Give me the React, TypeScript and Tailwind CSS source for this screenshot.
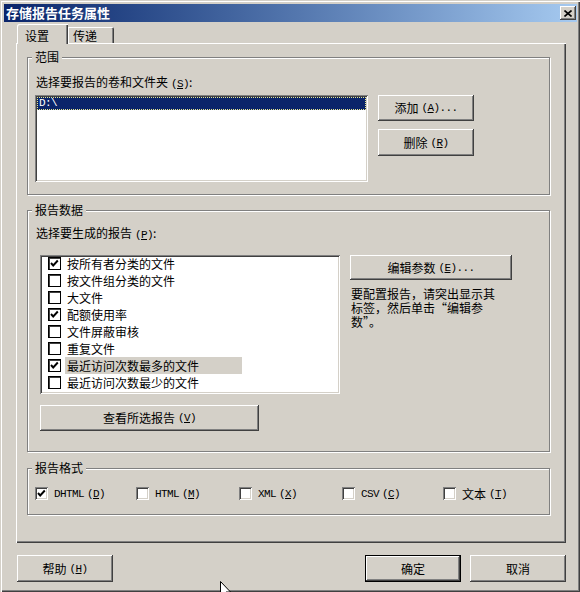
import React from "react";

const btn =
  "flex items-center justify-center bg-[#d4d0c8] shadow-[inset_-1px_-1px_#404040,inset_1px_1px_#ffffff,inset_-2px_-2px_#808080,inset_2px_2px_#d4d0c8]";
const sunken =
  "bg-white shadow-[inset_1px_1px_#808080,inset_-1px_-1px_#ffffff,inset_2px_2px_#404040,inset_-2px_-2px_#d4d0c8]";
const lat = "font-['Liberation_Mono',monospace] text-[11px] tracking-[-0.6px]";

function Mn({ k, dots }: { k: string; dots?: boolean }) {
  return (
    <span className={`${lat} ml-[3px]`}>
      (<span className="underline">{k}</span>){dots ? "..." : ""}
    </span>
  );
}

function Cb({ checked, flat }: { checked?: boolean; flat?: boolean }) {
  return (
    <div
      className={`relative w-[13px] h-[13px] shrink-0 bg-white ${
        flat
          ? "border border-black shadow-[inset_1px_1px_#404040]"
          : "shadow-[inset_1px_1px_#808080,inset_-1px_-1px_#ffffff,inset_2px_2px_#404040,inset_-2px_-2px_#d4d0c8]"
      }`}
    >
      {checked && (
        <svg
          className={`absolute ${flat ? "left-[-1px] top-[-1px]" : "left-0 top-0"}`}
          width="13"
          height="13"
          viewBox="0 0 13 13"
        >
          <polyline points="3,6 5.2,8.5 9.8,3.5" fill="none" stroke="#000" strokeWidth="1.9" />
        </svg>
      )}
    </div>
  );
}

function Group({
  label,
  className,
  children,
}: {
  label: string;
  className: string;
  children: React.ReactNode;
}) {
  return (
    <div
      className={`relative w-[523px] shrink-0 border border-[#808080] shadow-[inset_1px_1px_#ffffff,1px_1px_#ffffff] ${className}`}
    >
      <div className="absolute left-[4px] top-[-8px] bg-[#d4d0c8] px-[3px] text-[12px] leading-[14px]">
        {label}
      </div>
      {children}
    </div>
  );
}

const reports: [string, boolean, boolean?][] = [
  ["按所有者分类的文件", true],
  ["按文件组分类的文件", false],
  ["大文件", false],
  ["配额使用率", true],
  ["文件屏蔽审核", false],
  ["重复文件", false],
  ["最近访问次数最多的文件", true, true],
  ["最近访问次数最少的文件", false],
];

const formats: [string, string, string, boolean, string][] = [
  ["DHTML", "D", "w-[101px]", true, "latin"],
  ["HTML", "M", "w-[103px]", false, "latin"],
  ["XML", "X", "w-[103px]", false, "latin"],
  ["CSV", "C", "w-[101px]", false, "latin"],
  ["文本", "T", "w-[100px]", false, "cjk"],
];

export default function App() {
  return (
    <div className="relative w-[580px] h-[592px] overflow-hidden bg-[#d4d0c8] pt-[4px] pl-[4px] pr-[3px] text-black text-[12px] leading-[14px] font-['Noto_Sans_CJK_SC','Noto_Sans',sans-serif] shadow-[inset_1px_1px_#d4d0c8,inset_2px_2px_#ffffff,inset_-1px_-1px_#404040,inset_-2px_-2px_#808080]">
      {/* Title bar */}
      <div className="h-[18px] flex items-center bg-linear-to-r from-[#0a246a] to-[#a6caf0] pl-[2px] pr-[1px]">
        <span className="text-white font-bold text-[13px] leading-[16px]">存储报告任务属性</span>
        <div className={`${btn} ml-auto w-[16px] h-[14px]`}>
          <svg width="8" height="7" viewBox="0 0 8 7">
            <path d="M0.5 0.5 L7.5 6.5 M7.5 0.5 L0.5 6.5" stroke="#000" strokeWidth="1.6" />
          </svg>
        </div>
      </div>

      {/* Body */}
      <div className="pl-[12px]">
        {/* Tabs */}
        <div className="flex items-end h-[21px] pl-[1px]">
          <div className="relative z-10 w-[51px] h-[20px] -mb-[1px] bg-[#d4d0c8] rounded-tl-[2px] shadow-[inset_1px_1px_#ffffff,inset_-1px_0_#404040,inset_-2px_0_#808080] pl-[8px] pt-[5px]">
            设置
          </div>
          <div className="w-[46px] h-[16px] bg-[#d4d0c8] rounded-tr-[2px] shadow-[inset_1px_1px_#ffffff,inset_-1px_0_#404040,inset_-2px_0_#808080] pl-[5px] pt-[2px]">
            传递
          </div>
        </div>

        {/* Tab panel */}
        <div className="w-[550px] h-[500px] flex flex-col pl-[11px] pt-[14px] shadow-[inset_1px_1px_#ffffff,inset_-1px_-1px_#404040,inset_-2px_-2px_#808080]">
          <Group label="范围" className="h-[138px] pt-[17px] pl-[7px]">
            <div className="ml-[1px]">
              选择要报告的卷和文件夹
              <Mn k="S" />:
            </div>
            <div className="flex mt-[4px] gap-[10px]">
              <div className={`${sunken} w-[333px] h-[87px] p-[2px]`}>
                <div className="h-[13px] bg-[#0a246a] border border-dotted border-[#e8e890] flex items-center pl-[1px]">
                  <span className={`${lat} text-white leading-[11px]`}>D:\</span>
                </div>
              </div>
              <div className="flex flex-col gap-[8px]">
                <div className={`${btn} w-[96px] h-[26px]`}>
                  添加
                  <Mn k="A" dots />
                </div>
                <div className={`${btn} w-[96px] h-[27px]`}>
                  删除
                  <Mn k="R" />
                </div>
              </div>
            </div>
          </Group>

          <Group label="报告数据" className="mt-[15px] h-[242px] pt-[15px] pl-[8px]">
            <div>
              选择要生成的报告
              <Mn k="P" />:
            </div>
            <div className="flex mt-[13px] ml-[4px]">
              <div className={`${sunken} w-[300px] h-[139px] pt-0 pl-[8px]`}>
                {reports.map(([t, c, hl]) => (
                  <div key={t} className="h-[17px] flex items-center">
                    <Cb checked={c} flat />
                    <span
                      className={`ml-[4px] px-[2px] h-[17px] leading-[17px] ${
                        hl ? "bg-[#d4d0c8] w-[177px]" : ""
                      }`}
                    >
                      {t}
                    </span>
                  </div>
                ))}
              </div>
              <div className="ml-[10px] flex flex-col">
                <div className={`${btn} w-[162px] h-[25px]`}>
                  编辑参数
                  <Mn k="E" dots />
                </div>
                <div className="mt-[7px] ml-[1px] leading-[14px]">
                  要配置报告，请突出显示其
                  <br />
                  标签，然后单击“编辑参
                  <br />
                  数”。
                </div>
              </div>
            </div>
            <div className={`${btn} mt-[11px] ml-[4px] w-[219px] h-[26px]`}>
              查看所选报告
              <Mn k="V" />
            </div>
          </Group>

          <Group label="报告格式" className="mt-[16px] h-[47px] pt-[18px] pl-[7px]">
            <div className="flex">
              {formats.map(([t, k, w, c, kind]) => (
                <div key={t} className={`${w} flex items-center h-[13px]`}>
                  <Cb checked={c} />
                  <span className={`ml-[6px] ${kind === "latin" ? lat : ""}`}>{t}</span>
                  <Mn k={k} />
                </div>
              ))}
            </div>
          </Group>
        </div>

        {/* Bottom buttons */}
        <div className="flex w-[550px] mt-[12px]">
          <div className={`${btn} ml-[1px] w-[96px] h-[27px]`}>
            帮助
            <Mn k="H" />
          </div>
          <div className="ml-auto w-[96px] h-[27px] border border-black">
            <div className={`${btn} w-full h-full`}>确定</div>
          </div>
          <div className={`${btn} ml-[9px] w-[96px] h-[27px]`}>取消</div>
        </div>
      </div>

      {/* Mouse cursor */}
      <svg className="absolute left-[220px] top-[581px]" width="12" height="19" viewBox="0 0 12 19">
        <path d="M0.5 0.5 L0.5 15.5 L4 12 L6.5 17.5 L8.5 16.5 L6 11 L10.5 11 Z" fill="#fff" stroke="#000" strokeWidth="1" />
      </svg>
    </div>
  );
}
